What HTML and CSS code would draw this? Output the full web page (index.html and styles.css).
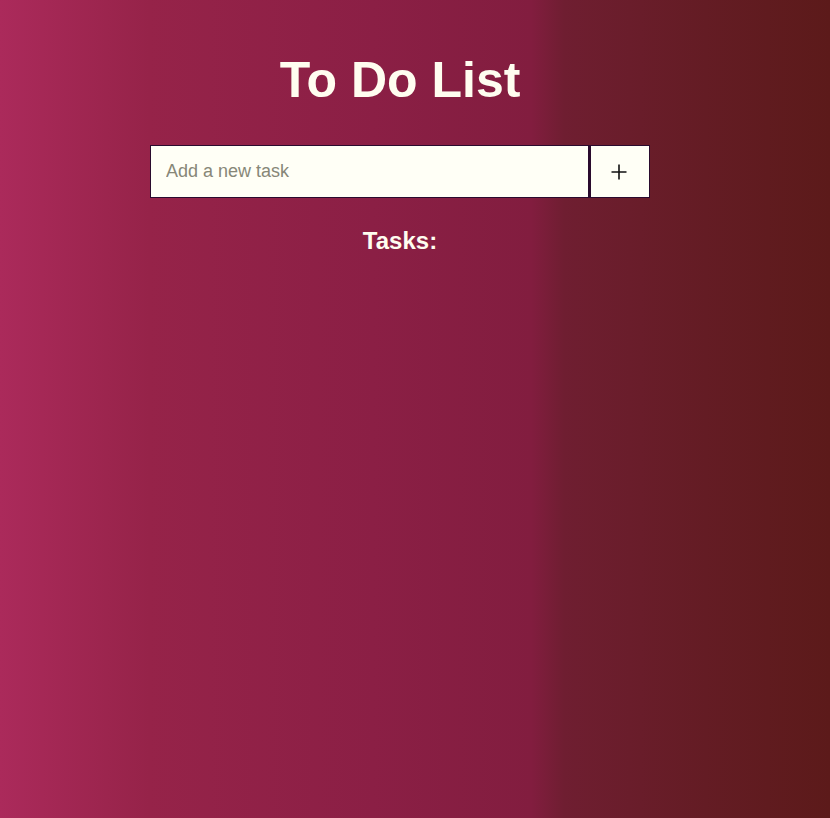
FILE: index.html
```html
<!DOCTYPE html>
<html lang="en">
<head>
<meta charset="utf-8">
<title>To Do List</title>
<link rel="stylesheet" href="styles.css">
</head>
<body>
  <main class="app">
    <h1 class="title">To Do List</h1>
    <form class="add-form" onsubmit="return false;">
      <input class="task-input" type="text" placeholder="Add a new task">
      <button class="add-btn" type="submit" aria-label="Add task">
        <svg width="16" height="16" viewBox="0 0 16 16" aria-hidden="true">
          <path d="M8 0.5V15.5M0.5 8H15.5" stroke="#111" stroke-width="1.6" fill="none"/>
        </svg>
      </button>
    </form>
    <h2 class="tasks-title">Tasks:</h2>
    <ul class="task-list"></ul>
  </main>
</body>
</html>
```
FILE: styles.css
```css
html, body {
  height: 100%;
}
body {
  margin: 0;
  font-family: "Liberation Sans", Arial, sans-serif;
  background: linear-gradient(to right, #ab2a5b 0%, #962349 18%, #8b1f45 45%, #821d3f 64%, #6f1e31 68%, #641c24 85%, #5c1a1a 100%);
  color: #fffdf0;
}
.app {
  width: 500px;
  margin-left: 150px;
  display: flex;
  flex-direction: column;
  align-items: stretch;
}
.title {
  margin: 53px 0 0;
  font-size: 50px;
  line-height: 55px;
  font-weight: bold;
  text-align: center;
}
.add-form {
  display: flex;
  margin-top: 37px;
  height: 53px;
}
.task-input {
  box-sizing: border-box;
  width: 439px;
  height: 53px;
  margin: 0;
  padding: 0 15px;
  border: 1px solid #2a0b2e;
  background: #fffff6;
  font-family: "Liberation Sans", Arial, sans-serif;
  font-size: 18px;
  color: #222;
  outline: none;
  border-radius: 0;
}
.task-input::placeholder {
  color: #878778;
}
.add-btn {
  box-sizing: border-box;
  width: 61px;
  height: 53px;
  margin: 0;
  padding: 0;
  border: 1px solid #2a0b2e;
  border-left-width: 2px;
  background: #fffff6;
  display: flex;
  align-items: center;
  justify-content: center;
  cursor: pointer;
  border-radius: 0;
}
.add-btn svg {
  display: block;
  margin-left: -2px;
}
.tasks-title {
  margin: 29px 0 0;
  font-size: 24px;
  line-height: 28px;
  font-weight: bold;
  text-align: center;
}
.task-list {
  list-style: none;
  margin: 0;
  padding: 0;
}
```
